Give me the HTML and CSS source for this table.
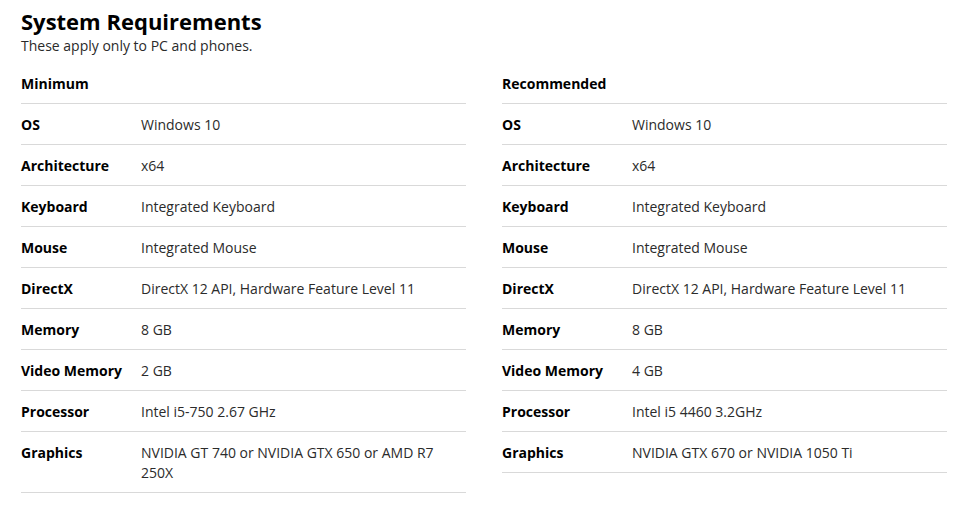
FILE: index.html
```html
<!DOCTYPE html>
<html>
<head>
<meta charset="utf-8">
<link rel="stylesheet" href="styles.css">
</head>
<body>
<div class="page">
  <h1 class="title">System Requirements</h1>
  <p class="subtitle">These apply only to PC and phones.</p>
  <div class="tables">
    <div class="spec spec-min">
      <div class="spec-head">Minimum</div>
      <div class="row"><div class="label">OS</div><div class="value">Windows 10</div></div>
      <div class="row"><div class="label">Architecture</div><div class="value">x64</div></div>
      <div class="row"><div class="label">Keyboard</div><div class="value">Integrated Keyboard</div></div>
      <div class="row"><div class="label">Mouse</div><div class="value">Integrated Mouse</div></div>
      <div class="row"><div class="label">DirectX</div><div class="value">DirectX 12 API, Hardware Feature Level 11</div></div>
      <div class="row"><div class="label">Memory</div><div class="value">8 GB</div></div>
      <div class="row"><div class="label">Video Memory</div><div class="value">2 GB</div></div>
      <div class="row"><div class="label">Processor</div><div class="value">Intel i5-750 2.67 GHz</div></div>
      <div class="row"><div class="label">Graphics</div><div class="value">NVIDIA GT 740 or NVIDIA GTX 650 or AMD R7 250X</div></div>
    </div>
    <div class="spec spec-rec">
      <div class="spec-head">Recommended</div>
      <div class="row"><div class="label">OS</div><div class="value">Windows 10</div></div>
      <div class="row"><div class="label">Architecture</div><div class="value">x64</div></div>
      <div class="row"><div class="label">Keyboard</div><div class="value">Integrated Keyboard</div></div>
      <div class="row"><div class="label">Mouse</div><div class="value">Integrated Mouse</div></div>
      <div class="row"><div class="label">DirectX</div><div class="value">DirectX 12 API, Hardware Feature Level 11</div></div>
      <div class="row"><div class="label">Memory</div><div class="value">8 GB</div></div>
      <div class="row"><div class="label">Video Memory</div><div class="value">4 GB</div></div>
      <div class="row"><div class="label">Processor</div><div class="value">Intel i5 4460 3.2GHz</div></div>
      <div class="row"><div class="label">Graphics</div><div class="value">NVIDIA GTX 670 or NVIDIA 1050 Ti</div></div>
    </div>
  </div>
</div>
</body>
</html>
```
FILE: styles.css
```css
html, body {
  margin: 0;
  background: #fff;
}
body {
  font-family: "Open Sans", "Noto Sans", sans-serif;
  color: #000;
}
.page {
  padding: 6px 0 0 21px;
}
.title {
  margin: 0;
  font-size: 22px;
  line-height: 30px;
  font-weight: 700;
  color: #000;
}
.subtitle {
  margin: 0;
  font-size: 14px;
  line-height: 20px;
  color: #2a2a2a;
}
.tables {
  margin-top: 7px;
  display: grid;
  grid-template-columns: 445px 445px;
  column-gap: 36px;
  align-items: start;
}
.spec-head {
  font-size: 14px;
  font-weight: 700;
  line-height: 20px;
  padding: 11px 0 9px;
  border-bottom: 1px solid #d9d9d9;
}
.row {
  display: grid;
  grid-template-columns: 120px 1fr;
  font-size: 14px;
  line-height: 20px;
  padding: 11px 0 9px;
  border-bottom: 1px solid #d9d9d9;
}
.spec-rec .row {
  grid-template-columns: 130px 1fr;
}
.label {
  font-weight: 700;
  color: #000;
}
.value {
  color: #2b2b2b;
  padding-right: 10px;
}
```
